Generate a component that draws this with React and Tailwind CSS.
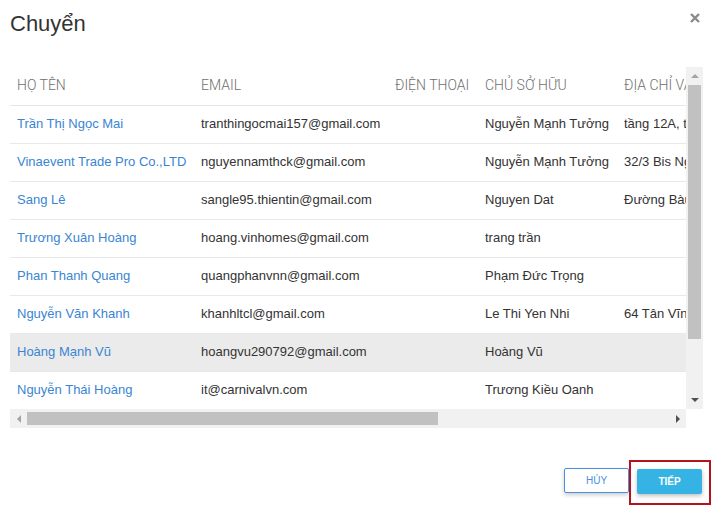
import React from "react";

const rows = [
  { name: "Trần Thị Ngọc Mai", email: "tranthingocmai157@gmail.com", phone: "", owner: "Nguyễn Mạnh Tưởng", addr: "tầng 12A, tòa nhà Vinaconex" },
  { name: "Vinaevent Trade Pro Co.,LTD", email: "nguyennamthck@gmail.com", phone: "", owner: "Nguyễn Mạnh Tưởng", addr: "32/3 Bis Ngô Tất Tố" },
  { name: "Sang Lê", email: "sangle95.thientin@gmail.com", phone: "", owner: "Nguyen Dat", addr: "Đường Bàu Cát" },
  { name: "Trương Xuân Hoàng", email: "hoang.vinhomes@gmail.com", phone: "", owner: "trang trần", addr: "" },
  { name: "Phan Thanh Quang", email: "quangphanvnn@gmail.com", phone: "", owner: "Phạm Đức Trọng", addr: "" },
  { name: "Nguyễn Văn Khanh", email: "khanhltcl@gmail.com", phone: "", owner: "Le Thi Yen Nhi", addr: "64 Tân Vĩnh" },
  { name: "Hoàng Mạnh Vũ", email: "hoangvu290792@gmail.com", phone: "", owner: "Hoàng Vũ", addr: "", active: true },
  { name: "Nguyễn Thái Hoàng", email: "it@carnivalvn.com", phone: "", owner: "Trương Kiều Oanh", addr: "" },
];

const headers = ["HỌ TÊN", "EMAIL", "ĐIỆN THOẠI", "CHỦ SỞ HỮU", "ĐỊA CHỈ VĂN PHÒNG"];

export default function App() {
  return (
    <div
      className="w-[713px] h-[508px] bg-white relative overflow-hidden text-[#333]"
      style={{ fontFamily: '"Liberation Sans", Arial, sans-serif' }}
    >
      {/* Header */}
      <div className="flex items-start justify-between pl-[10px] pr-[13px] pt-[12px]">
        <h1 className="text-[22px] leading-[24px] font-normal text-[#333]">Chuyển</h1>
        <button className="mt-[1px] text-[#8a8a8a]">
          <svg width="10" height="10" viewBox="0 0 10 10">
            <path d="M1 1L9 9M9 1L1 9" stroke="currentColor" strokeWidth="2.4" />
          </svg>
        </button>
      </div>

      {/* Table with scrollbars */}
      <div className="ml-[10px] mt-[31px] w-[693px] grid grid-cols-[676px_17px] grid-rows-[342px_19px]">
        <div className="overflow-hidden">
          <table className="table-fixed border-collapse w-[920px]">
            <colgroup>
              <col className="w-[184px]" />
              <col className="w-[194px]" />
              <col className="w-[90px]" />
              <col className="w-[139px]" />
              <col className="w-[313px]" />
            </colgroup>
            <thead>
              <tr className="h-[38px] border-b border-[#e6e6e6]">
                {headers.map((h) => (
                  <th
                    key={h}
                    className="pl-[7px] text-left font-light text-[14px] text-[#6f6f6f] whitespace-nowrap overflow-hidden"
                    style={{ fontFamily: 'Roboto, "Liberation Sans", sans-serif' }}
                  >
                    {h}
                  </th>
                ))}
              </tr>
            </thead>
            <tbody>
              {rows.map((r) => (
                <tr
                  key={r.name}
                  className={`h-[38px] border-b border-[#e8e8e8] text-[13px] ${r.active ? "bg-[#ebebeb]" : ""}`}
                >
                  <td className="pl-[7px] text-[#3a85d3] whitespace-nowrap">{r.name}</td>
                  <td className="pl-[7px] whitespace-nowrap">{r.email}</td>
                  <td className="pl-[7px] whitespace-nowrap">{r.phone}</td>
                  <td className="pl-[7px] whitespace-nowrap">{r.owner}</td>
                  <td className="pl-[7px] whitespace-nowrap">{r.addr}</td>
                </tr>
              ))}
            </tbody>
          </table>
        </div>

        {/* vertical scrollbar */}
        <div className="bg-[#f1f1f1] flex flex-col items-center">
          <div className="h-[18px] flex items-center justify-center">
            <div className="w-0 h-0 border-l-[4px] border-r-[4px] border-b-[4px] border-l-transparent border-r-transparent border-b-[#a3a3a3]" />
          </div>
          <div className="w-[13px] h-[254px] bg-[#c1c1c1]" />
          <div className="flex-1" />
          <div className="h-[18px] flex items-center justify-center">
            <div className="w-0 h-0 border-l-[4px] border-r-[4px] border-t-[4px] border-l-transparent border-r-transparent border-t-[#505050]" />
          </div>
        </div>

        {/* horizontal scrollbar */}
        <div className="bg-[#f1f1f1] flex items-center">
          <div className="w-[17px] flex items-center justify-center">
            <div className="w-0 h-0 border-t-[4px] border-b-[4px] border-r-[4px] border-t-transparent border-b-transparent border-r-[#a3a3a3]" />
          </div>
          <div className="w-[411px] h-[13px] bg-[#c1c1c1]" />
          <div className="flex-1" />
          <div className="w-[17px] flex items-center justify-center">
            <div className="w-0 h-0 border-t-[4px] border-b-[4px] border-l-[4px] border-t-transparent border-b-transparent border-l-[#505050]" />
          </div>
        </div>
        <div className="bg-white" />
      </div>

      {/* Footer buttons */}
      <div className="flex items-start pl-[564px] mt-[32px]">
        <button className="mt-[8px] w-[65px] h-[25px] bg-white border border-[#4a90e2] text-[#4a90e2] text-[10px] rounded-[2px] shadow-[0_2px_4px_rgba(0,0,0,0.2)]">
          HỦY
        </button>
        <div className="w-[82px] h-[45px] border-2 border-[#b3141c] pl-[6px] pt-[6px]">
          <button className="w-[65px] h-[25px] bg-[#34b3e4] text-white text-[10px] font-bold rounded-[2px] shadow-[0_2px_4px_rgba(0,0,0,0.25)]">
            TIẾP
          </button>
        </div>
      </div>
    </div>
  );
}
